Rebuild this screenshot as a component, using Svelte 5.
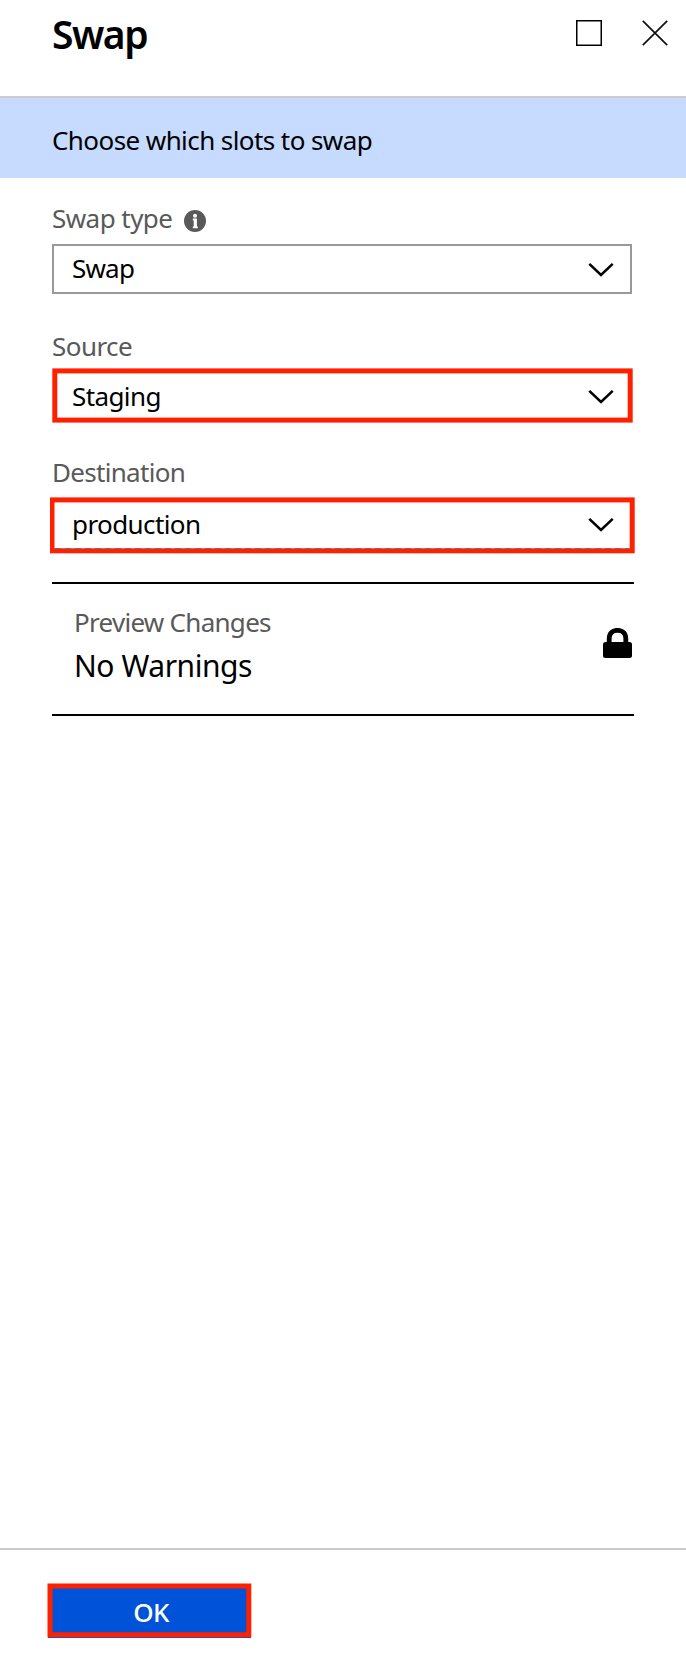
<script>
  const fields = [
    { id: 'type', label: 'Swap type', value: 'Swap', info: true },
    { id: 'source', label: 'Source', value: 'Staging' },
    { id: 'destination', label: 'Destination', value: 'production' }
  ];
</script>

<div class="blade">
  <header>
    <h1>Swap</h1>
    <div class="controls">
      <svg width="26" height="26" viewBox="0 0 26 26"><rect x=".75" y=".75" width="24.5" height="24.5" fill="none" stroke="#000" stroke-width="1.5" /></svg>
      <svg width="26" height="26" viewBox="0 0 26 26"><path d="M.8.8 25.2 25.2M25.2.8.8 25.2" stroke="#111" stroke-width="1.7" /></svg>
    </div>
  </header>
  <div class="banner"><span>Choose which slots to swap</span></div>
  <main>
    {#each fields as f}
      <section class="field {f.id}">
        <div class="label">
          <span>{f.label}</span>
          {#if f.info}
            <svg width="22" height="22" viewBox="0 0 22 22"><circle cx="11" cy="11" r="11" fill="#595959" /><circle cx="11" cy="5.7" r="2" fill="#fff" /><path d="M8.8 8.6h4.1v7.8h.9v1.9H8.8v-1.9h.9v-5.9h-.9z" fill="#fff" /></svg>
          {/if}
        </div>
        <div class="select">
          <span>{f.value}</span>
          <svg class="chevron" width="26" height="15" viewBox="0 0 26 15"><path d="M1.3 1.8 13 13 24.7 1.8" fill="none" stroke="#000" stroke-width="2.5" /></svg>
          {#if f.id === 'source'}
            <svg class="mark" width="584" height="60"><rect x="2.8" y="4.9" width="575.4" height="49.2" /></svg>
          {:else if f.id === 'destination'}
            <svg class="mark" width="590" height="60"><rect x="2" y="5.9" width="580.2" height="50.9" /><path d="M5 54.5H579" stroke="#667085" stroke-width="1" stroke-dasharray="6 4" /></svg>
          {/if}
        </div>
      </section>
    {/each}
    <section class="preview">
      <div>
        <div class="caption">Preview Changes</div>
        <div class="result">No Warnings</div>
      </div>
      <svg width="29" height="30" viewBox="0 0 29 30"><path d="M6.2 15V10.5C6.2 5.3 9.5 2.3 14.5 2.3s8.3 3 8.3 8.2V15" fill="none" stroke="#000" stroke-width="4.8" /><rect y="14" width="29" height="16" rx="2.5" /></svg>
    </section>
  </main>
  <footer>
    <button><span>OK</span><svg class="mark" width="208" height="60"><rect x="3" y="3" width="198.8" height="48.8" /></svg></button>
  </footer>
</div>

<style>
  :global(body) { background: #fff; }
  .blade {
    height: 1660px;
    display: flex;
    flex-direction: column;
    font: 26px/36px "Noto Sans", "Open Sans", sans-serif;
    color: #000;
    overflow: hidden;
  }
  svg { display: block; flex: none; }
  header {
    box-sizing: border-box;
    height: 98px;
    border-bottom: 2px solid #ccc;
    padding: 8px 18px 0 52px;
    display: flex;
    justify-content: space-between;
  }
  h1 { margin: 1px 0 0; font-size: 39px; font-weight: 600; line-height: 50px; letter-spacing: -1.5px; }
  .controls { display: flex; gap: 40px; padding-top: 12px; }
  .banner { box-sizing: border-box; height: 80px; padding: 24px 52px 0; background: #c6dbff; letter-spacing: -.58px; }
  main { flex: 1; padding: 22px 52px 0; }
  .label { height: 36px; display: flex; align-items: center; gap: 12px; color: #595959; letter-spacing: -.55px; }
  .label svg { margin-top: 6px; }
  .select {
    position: relative;
    box-sizing: border-box;
    width: 580px;
    height: 50px;
    margin-top: 8px;
    padding: 0 16px 0 18px;
    border: 2px solid #999;
    display: flex;
    align-items: center;
    justify-content: space-between;
    letter-spacing: -.6px;
  }
  .type .select span { margin-top: -2px; }
  .type .select { letter-spacing: -.8px; }
  .source { margin-top: 34px; }
  .source .select, .destination .select { border-color: transparent; }
  .source .select { margin-top: 7px; }
  .source .chevron, .destination .chevron { margin-top: 1px; }
  .destination { margin-top: 33px; }
  .destination .label { letter-spacing: -.7px; }
  .destination .select { margin-top: 9px; }
  .mark { position: absolute; }
  .mark rect { fill: none; stroke: #ff2000; stroke-width: 5; }
  .source .mark { left: -2px; top: -7px; }
  .destination .mark { left: -4px; top: -7px; }
  .preview {
    box-sizing: border-box;
    width: 582px;
    height: 134px;
    margin-top: 33px;
    padding: 20px 2px 0 22px;
    border: solid #000;
    border-width: 2px 0;
    display: flex;
    justify-content: space-between;
  }
  .preview svg { margin-top: 24px; }
  .caption { color: #595959; letter-spacing: -.72px; }
  .result { font-size: 30px; line-height: 40px; margin-top: 6px; letter-spacing: -.45px; }
  footer { box-sizing: border-box; height: 112px; border-top: 2px solid #ccc; padding: 34px 48px; }
  button {
    position: relative;
    display: block;
    width: 203px;
    height: 54px;
    padding: 2px 0 0 3px;
    border: 0;
    background: #0052d9;
    color: #fff;
    font: inherit;
    font-weight: 500;
    letter-spacing: -.6px;
  }
  button .mark { left: -1px; top: -1px; }
</style>
